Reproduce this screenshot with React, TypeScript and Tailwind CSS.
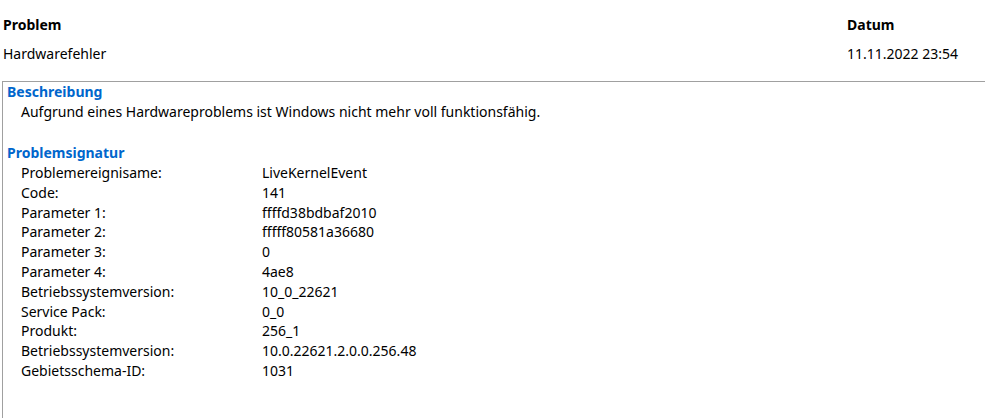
import React from "react";

const rows: [string, string][] = [
  ["Problemereignisame:", "LiveKernelEvent"],
  ["Code:", "141"],
  ["Parameter 1:", "ffffd38bdbaf2010"],
  ["Parameter 2:", "fffff80581a36680"],
  ["Parameter 3:", "0"],
  ["Parameter 4:", "4ae8"],
  ["Betriebssystemversion:", "10_0_22621"],
  ["Service Pack:", "0_0"],
  ["Produkt:", "256_1"],
  ["Betriebssystemversion:", "10.0.22621.2.0.0.256.48"],
  ["Gebietsschema-ID:", "1031"],
];

export default function App() {
  return (
    <div
      className="w-[985px] h-[418px] bg-white text-black overflow-hidden text-[14px]"
      style={{ fontFamily: '"Noto Sans", "Liberation Sans", sans-serif' }}
    >
      <div className="flex pt-[15px] h-[35px] leading-[20px]">
        <div className="w-[847px] pl-[3px] font-bold">Problem</div>
        <div className="font-bold">Datum</div>
      </div>
      <div className="flex h-[46px] leading-[20px] pt-[9px]">
        <div className="w-[847px] pl-[3px]">Hardwarefehler</div>
        <div>11.11.2022 23:54</div>
      </div>
      <div className="ml-[2px] border-t border-l border-[#a0a0a0] h-[400px]">
        <div className="pl-[4px] leading-[20px] font-bold text-[#0066cc]">Beschreibung</div>
        <div className="pl-[18px] leading-[20px]">
          Aufgrund eines Hardwareproblems ist Windows nicht mehr voll funktionsfähig.
        </div>
        <div className="pl-[4px] leading-[20px] font-bold text-[#0066cc] mt-[21px]">Problemsignatur</div>
        <div className="pl-[18px]">
          {rows.map(([k, v], i) => (
            <div key={i} className="flex h-[19.8px] leading-[20px]">
              <div className="w-[241px]">{k}</div>
              <div>{v}</div>
            </div>
          ))}
        </div>
      </div>
    </div>
  );
}
